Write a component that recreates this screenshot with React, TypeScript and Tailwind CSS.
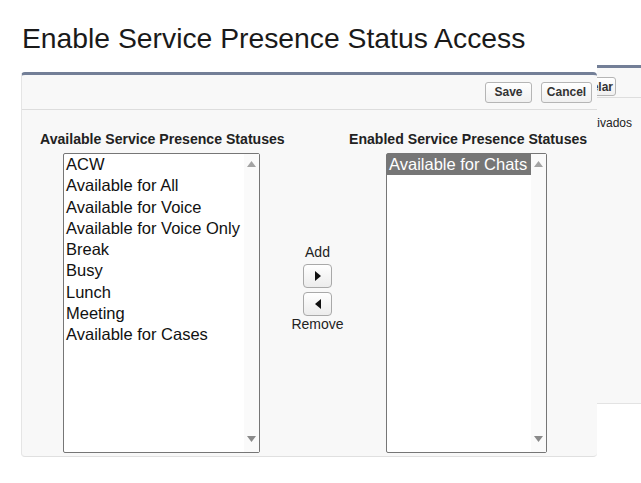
import React from 'react';

const available = [
  'ACW',
  'Available for All',
  'Available for Voice',
  'Available for Voice Only',
  'Break',
  'Busy',
  'Lunch',
  'Meeting',
  'Available for Cases',
];

const enabled = ['Available for Chats'];

function Triangle({ dir, color }: { dir: 'up' | 'down' | 'left' | 'right'; color: string }) {
  const pts = {
    up: '0,6 4.5,0 9,6',
    down: '0,0 9,0 4.5,6',
    right: '0,0 6,5 0,10',
    left: '6,0 0,5 6,10',
  }[dir];
  const size = dir === 'up' || dir === 'down' ? { w: 9, h: 6 } : { w: 6, h: 10 };
  return (
    <svg width={size.w} height={size.h} viewBox={`0 0 ${size.w} ${size.h}`}>
      <polygon points={pts} fill={color} />
    </svg>
  );
}

function ListBox({ items, selected, className }: { items: string[]; selected?: string; className: string }) {
  return (
    <div className={`flex h-[300px] bg-white border border-[#767676] rounded-[2px] ${className}`}>
      <div className="flex-1 flex flex-col">
        {items.map((item) => (
          <div
            key={item}
            className={`px-[2px] text-[16.5px] leading-[21.25px] whitespace-nowrap ${
              item === selected ? 'bg-[#767676] text-white' : 'text-[#111]'
            }`}
          >
            {item}
          </div>
        ))}
      </div>
      <div className="w-[15px] bg-[#fafafa] flex flex-col items-center justify-between pt-[7px] pb-[10px]">
        <Triangle dir="up" color="#a3a3a3" />
        <Triangle dir="down" color="#8a8a8a" />
      </div>
    </div>
  );
}

function ArrowButton({ dir }: { dir: 'left' | 'right' }) {
  return (
    <button className="w-[29px] h-[24px] flex items-center justify-center rounded-[4px] border border-[#a9a9a9] bg-gradient-to-b from-white to-[#ececec]">
      <Triangle dir={dir} color="#111" />
    </button>
  );
}

export default function App() {
  return (
    <div
      className="w-[641px] h-[483px] bg-white overflow-hidden"
      style={{ fontFamily: '"Liberation Sans", Arial, sans-serif' }}
    >
      <h1 className="pl-[22px] pt-[22px] text-[28.3px] leading-[32px] text-[#1a1a1a] font-normal whitespace-nowrap">
        Enable Service Presence Status Access
      </h1>

      <div className="relative mt-[11px]">
        {/* window behind the dialog, only its right edge shows */}
        <div className="absolute left-[597px] right-0 top-0 h-[339px] overflow-hidden bg-[#f8f8f8] border-t-[3px] border-t-[#737f97] border-b border-b-[#e3e3e3]">
          <div className="h-[30px] flex items-start justify-end pt-[9px] pr-[25px] border-b border-b-[#dedede]">
            <button className="shrink-0 h-[19px] pl-[6px] pr-[2px] rounded-[3px] border border-[#b5b5b5] bg-gradient-to-b from-white to-[#f0f0f0] text-[12px] font-bold text-[#333] leading-none">
              Cancelar
            </button>
          </div>
          <div className="flex justify-end pr-[9px] pt-[18px]">
            <span className="shrink-0 whitespace-nowrap text-[12px] leading-[14px] text-[#222]">
              Estados activados
            </span>
          </div>
        </div>

        {/* dialog */}
        <div className="relative ml-[21px] w-[576px] pt-[7px]">
          <div className="bg-[#f8f8f8] border-t-[3px] border-t-[#737f97] border-l border-l-[#e5e5e5] border-b border-b-[#e0e0e0] rounded-[4px]">
            <div className="h-[35px] flex items-center justify-end gap-[9px] pr-[5px] border-b border-b-[#dddddd]">
              <button className="w-[47px] h-[21px] rounded-[3px] border border-[#b5b5b5] bg-gradient-to-b from-white to-[#f0f0f0] text-[12px] font-bold text-[#333]">
                Save
              </button>
              <button className="w-[51px] h-[21px] rounded-[3px] border border-[#b5b5b5] bg-gradient-to-b from-white to-[#f0f0f0] text-[12px] font-bold text-[#333]">
                Cancel
              </button>
            </div>

            <div className="flex pl-[18px] pt-[21px] pb-[3px]">
              <div className="w-[246px] flex flex-col">
                <div className="h-[16px] leading-[16px] text-[14.1px] font-bold text-[#222] whitespace-nowrap mb-[6px]">
                  Available Service Presence Statuses
                </div>
                <ListBox items={available} className="ml-[23px] w-[197px]" />
              </div>

              <div className="w-[63px] flex flex-col items-center pt-[113px] text-[14px] leading-[16px] text-[#222]">
                <div>Add</div>
                <div className="mt-[4px] flex flex-col gap-[4px]">
                  <ArrowButton dir="right" />
                  <ArrowButton dir="left" />
                </div>
                <div>Remove</div>
              </div>

              <div className="w-[239px] flex flex-col">
                <div className="h-[16px] leading-[16px] text-[14.1px] font-bold text-[#222] whitespace-nowrap mb-[6px]">
                  Enabled Service Presence Statuses
                </div>
                <ListBox items={enabled} selected="Available for Chats" className="ml-[37px] w-[161px]" />
              </div>
            </div>
          </div>
        </div>
      </div>
    </div>
  );
}
